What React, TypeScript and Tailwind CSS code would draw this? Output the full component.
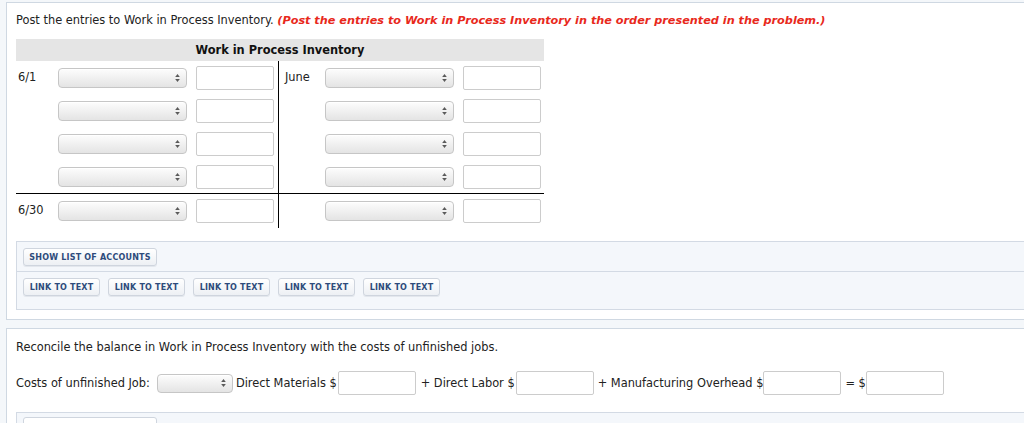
import React from 'react';

// Mac-style select with the small up/down arrows on the right
function Select({ className = 'w-[129px] h-[20px]' }: { className?: string }) {
  return (
    <div
      className={`relative shrink-0 rounded-[4px] border border-[#c6c6c6] bg-gradient-to-b from-[#fdfdfd] to-[#e4e4e4] shadow-[inset_0_1px_0_#fff] ${className}`}
    >
      <svg
        className="absolute right-[6px] top-1/2 -translate-y-1/2"
        width="5"
        height="9"
        viewBox="0 0 5 9"
      >
        <path d="M2.5 0.5 L4.8 3.6 L0.2 3.6 Z" fill="#5a5a5a" />
        <path d="M2.5 8.5 L4.8 5.4 L0.2 5.4 Z" fill="#5a5a5a" />
      </svg>
    </div>
  );
}

function TextInput({ className = 'w-[78px]' }: { className?: string }) {
  return (
    <div
      className={`h-[24px] shrink-0 rounded-[2px] border border-[#cccccc] bg-white ${className}`}
    />
  );
}

function SmallButton({ label, width }: { label: string; width: string }) {
  return (
    <div
      className={`flex h-[18px] ${width} items-center justify-center rounded-[3px] border border-[#cfd5de] bg-gradient-to-b from-[#ffffff] to-[#edf0f4] text-[8px] font-bold tracking-[0.2px] text-[#2e4b7b] shadow-[0_1px_0_#e3e7ed]`}
    >
      {label}
    </div>
  );
}

function EntryRow({ label, left }: { label?: string; left?: boolean }) {
  return (
    <div className={`flex h-[33px] items-center ${left ? 'pl-[2px]' : 'pl-[6px]'}`}>
      <span className="w-[40px] shrink-0">{label}</span>
      <Select />
      <div className="w-[9px] shrink-0" />
      <TextInput />
    </div>
  );
}

export default function App() {
  return (
    <div className="h-[423px] w-[1024px] overflow-hidden bg-[#f4f7fa] pt-[2px] font-['DejaVu_Sans',Verdana,sans-serif] text-[11.4px] leading-[13px] text-[#222]">
      {/* Posting panel */}
      <div className="ml-[6px] w-[1030px] border-y border-l border-[#cfd8e2] bg-white pb-[9px] pl-[9px] pt-[11px]">
        <p className="whitespace-nowrap">
          Post the entries to Work in Process Inventory.{' '}
          <span className="text-[11.25px] font-bold italic text-[#e8291c]">
            (Post the entries to Work in Process Inventory in the order presented in the problem.)
          </span>
        </p>

        {/* T-account */}
        <div className="mt-[12px] w-[528px]">
          <div className="flex h-[22px] items-center justify-center bg-[#e5e5e5] font-bold text-[#111]">
            Work in Process Inventory
          </div>
          <div className="flex">
            <div className="w-[263px] border-r border-black">
              <EntryRow label="6/1" left />
              <EntryRow left />
              <EntryRow left />
              <EntryRow left />
            </div>
            <div className="flex-1">
              <EntryRow label="June" />
              <EntryRow />
              <EntryRow />
              <EntryRow />
            </div>
          </div>
          <div className="flex border-t border-black">
            <div className="w-[263px] border-r border-black pb-[1px]">
              <EntryRow label="6/30" left />
            </div>
            <div className="flex-1">
              <EntryRow />
            </div>
          </div>
        </div>

        {/* Account list / links */}
        <div className="mt-[13px] border-y border-l border-[#d3dae4] bg-[#f4f7fb]">
          <div className="border-b border-[#d3dae4] pb-[5px] pl-[6px] pt-[6px]">
            <SmallButton label="SHOW LIST OF ACCOUNTS" width="w-[134px]" />
          </div>
          <div className="flex gap-[8px] pb-[13px] pl-[6px] pt-[6px]">
            <SmallButton label="LINK TO TEXT" width="w-[77px]" />
            <SmallButton label="LINK TO TEXT" width="w-[77px]" />
            <SmallButton label="LINK TO TEXT" width="w-[77px]" />
            <SmallButton label="LINK TO TEXT" width="w-[77px]" />
            <SmallButton label="LINK TO TEXT" width="w-[77px]" />
          </div>
        </div>
      </div>

      {/* Reconcile panel */}
      <div className="ml-[6px] mt-[8px] w-[1030px] border-y border-l border-[#cfd8e2] bg-white pl-[9px] pt-[12px]">
        <p className="whitespace-nowrap">
          Reconcile the balance in Work in Process Inventory with the costs of unfinished jobs.
        </p>
        <div className="mt-[17px] flex items-center whitespace-nowrap">
          <span>Costs of unfinished Job:</span>
          <Select className="ml-[7px] mr-[3px] h-[19px] w-[76px]" />
          <span>Direct Materials $</span>
          <TextInput className="ml-[1px] w-[78px]" />
          <span className="ml-[5px]">+ Direct Labor $</span>
          <TextInput className="ml-[1px] w-[78px]" />
          <span className="ml-[4px]">+ Manufacturing Overhead $</span>
          <TextInput className="ml-[0px] w-[78px]" />
          <span className="ml-[4px]">= $</span>
          <TextInput className="ml-[0px] w-[78px]" />
        </div>
        <div className="mt-[17px] h-[40px] border-l border-t border-[#d3dae4] bg-[#f4f7fb] pl-[6px] pt-[4px]">
          <div className="h-[18px] w-[134px] rounded-[3px] border border-[#cfd5de] bg-white" />
        </div>
      </div>
    </div>
  );
}
